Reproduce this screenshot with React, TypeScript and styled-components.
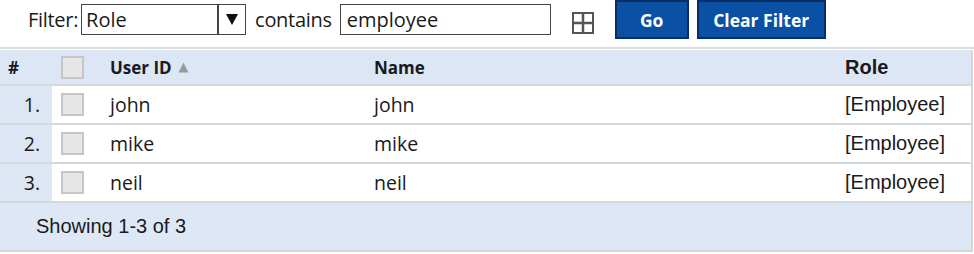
import React from 'react';
import styled, { createGlobalStyle } from 'styled-components';

const GlobalStyle = createGlobalStyle`
  html, body {
    margin: 0;
    padding: 0;
    background: #ffffff;
  }
  body {
    font-family: 'Open Sans', 'Liberation Sans', sans-serif;
    color: #1a1a1a;
  }
`;

const Page = styled.div`
  width: 974px;
  height: 254px;
  overflow: hidden;
  background: #fff;
`;

const Toolbar = styled.div`
  display: flex;
  align-items: flex-start;
  height: 49px;
  padding: 0 0 0 28px;
  border-bottom: 2px solid #dcdcdc;
  box-sizing: border-box;
  font-size: 20px;
  margin-bottom: 1px;
`;

const Label = styled.span<{ $gap: number }>`
  margin-top: 4px;
  line-height: 31px;
  margin-right: ${({ $gap }) => $gap}px;
  letter-spacing: -0.3px;
`;

const SelectBox = styled.div`
  display: flex;
  height: 31px;
  margin-top: 4px;
  margin-right: 9px;
`;

const SelectValue = styled.div`
  width: 137px;
  border: 1px solid #444;
  box-sizing: border-box;
  padding: 0 4px;
  line-height: 29px;
  background: #fff;
`;

const SelectArrow = styled.div`
  width: 28px;
  border: 1px solid #444;
  box-sizing: border-box;
  display: flex;
  align-items: center;
  justify-content: center;
  background: #fff;
`;

const TextInput = styled.div`
  width: 211px;
  height: 31px;
  margin-top: 4px;
  border: 1px solid #444;
  box-sizing: border-box;
  padding: 0 6px;
  line-height: 29px;
  margin-right: 21px;
`;

const PlusBox = styled.div`
  width: 22px;
  height: 22px;
  margin-top: 12px;
  margin-right: 21px;
`;

const Button = styled.button<{ $width: number }>`
  width: ${({ $width }) => $width}px;
  height: 39px;
  margin-right: 8px;
  background: #0a51a5;
  border: 2px solid #0a2d66;
  color: #fff;
  font-family: 'Open Sans', sans-serif;
  font-weight: 700;
  font-size: 17.5px;
  padding: 0;
`;

const Table = styled.div`
  width: 973px;
  border-right: 2px solid #d6d6d6;
  box-sizing: border-box;
`;

const Row = styled.div<{ $head?: boolean }>`
  display: grid;
  grid-template-columns: 52px 58px 264px 471px 1fr;
  height: ${({ $head }) => ($head ? 36 : 39)}px;
  align-items: center;
  background: ${({ $head }) => ($head ? '#dce6f4' : '#fff')};
  border-bottom: 2px solid #d5d8dd;
  box-sizing: border-box;
  font-size: ${({ $head }) => ($head ? 17 : 19.5)}px;
`;

const NumCell = styled.div<{ $head?: boolean }>`
  height: 100%;
  display: flex;
  align-items: center;
  justify-content: ${({ $head }) => ($head ? 'flex-start' : 'flex-end')};
  padding: ${({ $head }) => ($head ? '0 0 0 8px' : '0 12px 0 0')};
  background: #dce6f4;
  font-weight: ${({ $head }) => ($head ? 700 : 400)};
  box-sizing: border-box;
`;

const CheckCell = styled.div`
  display: flex;
  align-items: center;
  padding-left: 9px;
`;

const Check = styled.div`
  width: 23px;
  height: 23px;
  background: #e6e6e6;
  border: 2px solid #c6c6c6;
  box-sizing: border-box;
`;

const HeadText = styled.div`
  font-weight: 700;
  display: flex;
  align-items: center;
  gap: 6px;
`;

const Cell = styled.div``;

const RoleHead = styled.div`
  font-family: 'Liberation Sans', Arial, sans-serif;
  font-weight: 700;
  font-size: 20px;
`;

const RoleCell = styled.div`
  font-family: 'Liberation Sans', Arial, sans-serif;
  font-size: 20px;
`;

const Footer = styled.div`
  height: 49px;
  background: #dde7f5;
  display: flex;
  align-items: center;
  padding-left: 36px;
  font-family: 'Liberation Sans', Arial, sans-serif;
  font-size: 20px;
  border-bottom: 2px solid #d6d6d6;
  box-sizing: border-box;
`;

const users = [
  { id: 'john', name: 'john', role: '[Employee]' },
  { id: 'mike', name: 'mike', role: '[Employee]' },
  { id: 'neil', name: 'neil', role: '[Employee]' },
];

export default function App() {
  return (
    <Page>
      <GlobalStyle />
      <Toolbar>
        <Label $gap={3}>Filter:</Label>
        <SelectBox>
          <SelectValue>Role</SelectValue>
          <SelectArrow>
            <svg width="14" height="13" viewBox="0 0 14 13">
              <path d="M1 1 L13 1 L7 12 Z" fill="#111" />
            </svg>
          </SelectArrow>
        </SelectBox>
        <Label $gap={8}>contains</Label>
        <TextInput>employee</TextInput>
        <PlusBox>
          <svg width="22" height="22" viewBox="0 0 22 22">
            <rect x="1" y="1" width="20" height="20" fill="#fff" stroke="#555" strokeWidth="2" />
            <path d="M11 2 V20 M2 11 H20" stroke="#555" strokeWidth="2.5" />
          </svg>
        </PlusBox>
        <Button $width={74}>Go</Button>
        <Button $width={129}>Clear Filter</Button>
      </Toolbar>
      <Table>
        <Row $head>
          <NumCell $head>#</NumCell>
          <CheckCell>
            <Check />
          </CheckCell>
          <HeadText>
            User ID
            <svg width="11" height="11" viewBox="0 0 11 11">
              <path d="M5.5 0.5 L10.5 10.5 L0.5 10.5 Z" fill="#999" />
            </svg>
          </HeadText>
          <HeadText>Name</HeadText>
          <RoleHead>Role</RoleHead>
        </Row>
        {users.map((u, i) => (
          <Row key={u.id}>
            <NumCell>{i + 1}.</NumCell>
            <CheckCell>
              <Check />
            </CheckCell>
            <Cell>{u.id}</Cell>
            <Cell>{u.name}</Cell>
            <RoleCell>{u.role}</RoleCell>
          </Row>
        ))}
        <Footer>Showing 1-3 of 3</Footer>
      </Table>
    </Page>
  );
}
